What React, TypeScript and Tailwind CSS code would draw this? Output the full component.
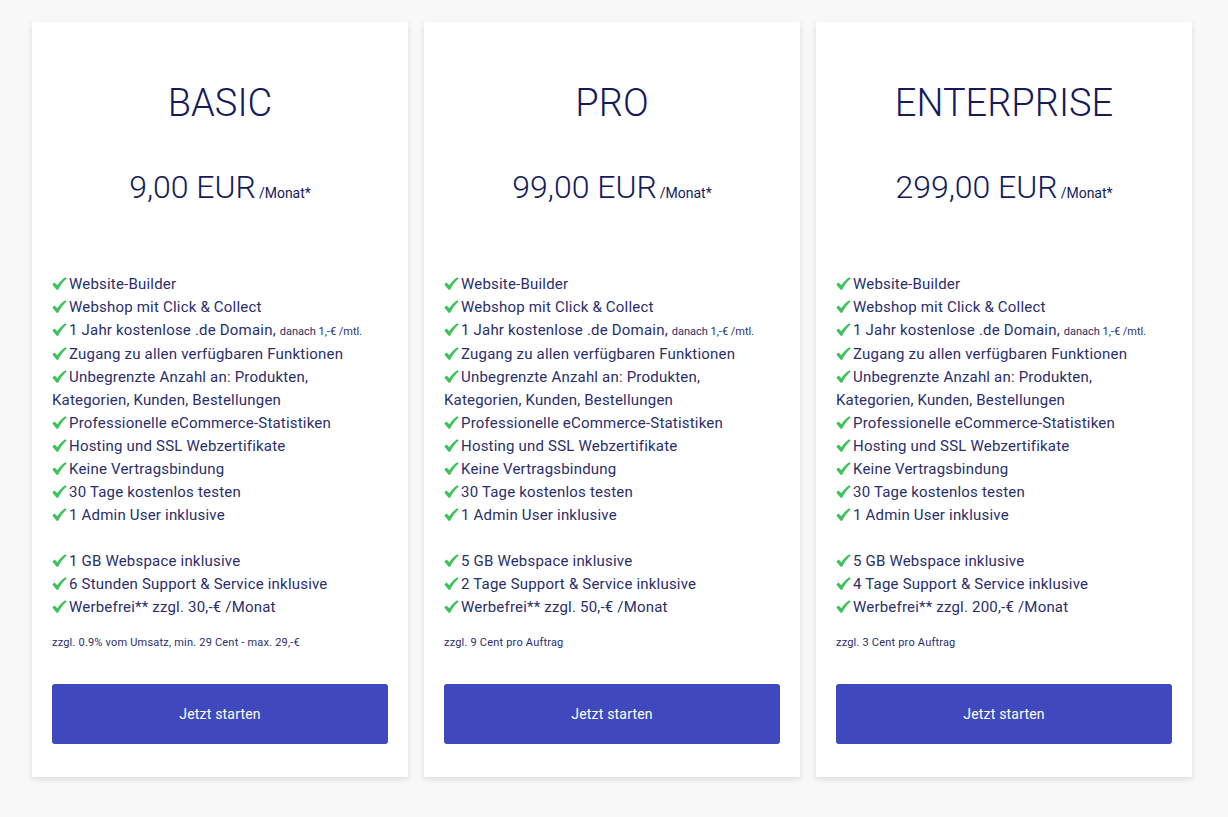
import React from "react";

interface Plan {
  name: string;
  price: string;
  webspace: string;
  support: string;
  adFree: string;
  note: string;
}

const plans: Plan[] = [
  {
    name: "BASIC",
    price: "9,00 EUR",
    webspace: "1 GB Webspace inklusive",
    support: "6 Stunden Support & Service inklusive",
    adFree: "Werbefrei** zzgl. 30,-€ /Monat",
    note: "zzgl. 0.9% vom Umsatz, min. 29 Cent - max. 29,-€",
  },
  {
    name: "PRO",
    price: "99,00 EUR",
    webspace: "5 GB Webspace inklusive",
    support: "2 Tage Support & Service inklusive",
    adFree: "Werbefrei** zzgl. 50,-€ /Monat",
    note: "zzgl. 9 Cent pro Auftrag",
  },
  {
    name: "ENTERPRISE",
    price: "299,00 EUR",
    webspace: "5 GB Webspace inklusive",
    support: "4 Tage Support & Service inklusive",
    adFree: "Werbefrei** zzgl. 200,-€ /Monat",
    note: "zzgl. 3 Cent pro Auftrag",
  },
];

// heavy check mark
const Check = () => (
  <svg width="15" height="13" viewBox="0 0 15 13" className="inline-block mr-[2px] -mt-[3px] align-middle">
    <path d="M0.3 7.4 L2.6 5.6 L5.3 8.3 C7.4 5.2 9.8 2.4 13.2 0.2 L14.8 1.4 C11.2 4.3 8.4 8 6.2 12.7 L4.6 12.7 Z" fill="#3ec25c" />
  </svg>
);

const Feature = ({ children }: { children: React.ReactNode }) => (
  <li>
    <Check />
    {children}
  </li>
);

const PlanCard = ({ plan }: { plan: Plan }) => {
  return (
    <div className="flex-1 bg-white shadow-[0_2px_6px_rgba(0,0,0,0.12)] px-5 pt-[57px] pb-[33px] flex flex-col">
      <h2 className="text-center text-[38px] leading-[48px] font-light text-[#141a5c]">{plan.name}</h2>
      <div className="mt-[40px] flex items-baseline justify-center text-[#141a5c]">
        <span className="text-[32px] leading-[40px] font-light">{plan.price}</span>
        <span className="text-[14px] ml-[3px]">/Monat*</span>
      </div>
      <ul className="mt-[66px] text-[15px] leading-[23px] tracking-[0.2px] text-[#2a2e6b]">
        <Feature>Website-Builder</Feature>
        <Feature>Webshop mit Click &amp; Collect</Feature>
        <Feature>
          1 Jahr kostenlose .de Domain, <span className="text-[11px] tracking-normal">danach 1,-€ /mtl.</span>
        </Feature>
        <Feature>Zugang zu allen verfügbaren Funktionen</Feature>
        <Feature>
          Unbegrenzte Anzahl an: Produkten,
          <br />
          Kategorien, Kunden, Bestellungen
        </Feature>
        <Feature>Professionelle eCommerce-Statistiken</Feature>
        <Feature>Hosting und SSL Webzertifikate</Feature>
        <Feature>Keine Vertragsbindung</Feature>
        <Feature>30 Tage kostenlos testen</Feature>
        <Feature>1 Admin User inklusive</Feature>
        <li className="h-[23px]" />
        <Feature>{plan.webspace}</Feature>
        <Feature>{plan.support}</Feature>
        <Feature>{plan.adFree}</Feature>
      </ul>
      <p className="mt-[16px] text-[11px] leading-[15px] tracking-[0.2px] text-[#2a2e6b]">{plan.note}</p>
      <button className="mt-[34px] h-[60px] w-full rounded-[3px] bg-[#4048bd] text-white text-[14px] font-normal tracking-[0.2px]">
        Jetzt starten
      </button>
    </div>
  );
};

const App = () => {
  return (
    <div
      className="min-h-screen bg-[#f8f8f8] pl-8 pr-9 pt-[22px] pb-10"
      style={{ fontFamily: "Roboto, 'Liberation Sans', sans-serif" }}
    >
      <div className="flex gap-4">
        {plans.map((p) => (
          <PlanCard key={p.name} plan={p} />
        ))}
      </div>
    </div>
  );
};

export default App;
